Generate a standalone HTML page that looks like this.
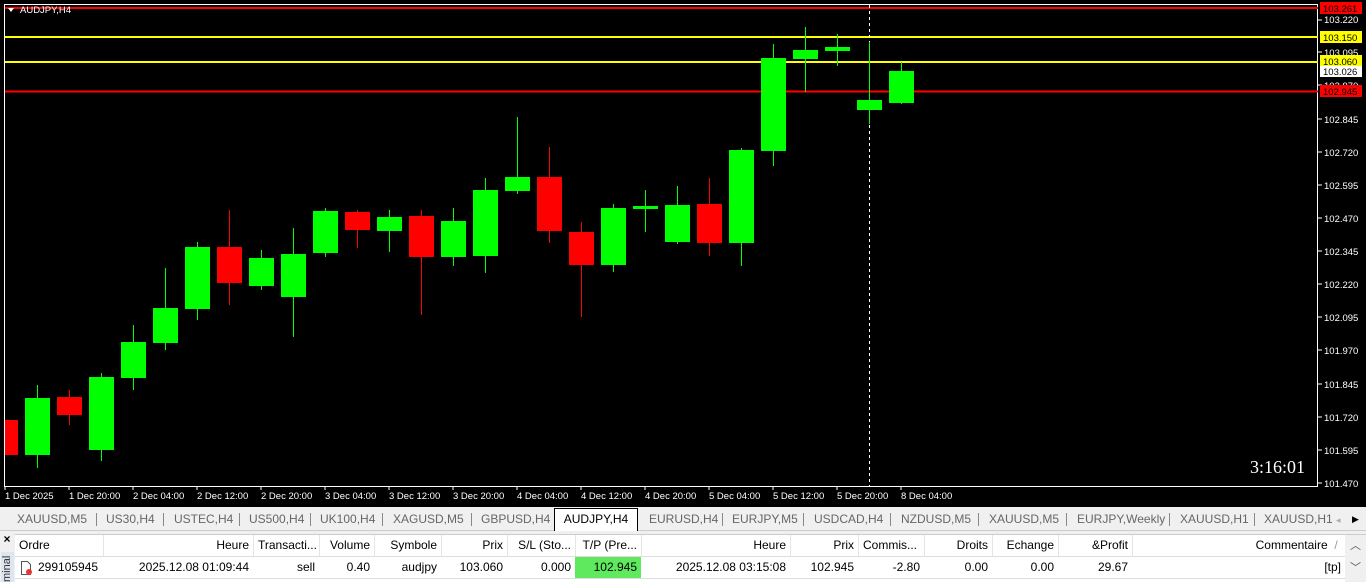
<!DOCTYPE html>
<html><head><meta charset="utf-8"><style>
*{margin:0;padding:0;box-sizing:border-box}
body{width:1366px;height:582px;overflow:hidden;background:#f0f0f0;font-family:"Liberation Sans",sans-serif;position:relative}
.a{position:absolute;white-space:nowrap}
.c{position:absolute;height:21px;line-height:21px;font-size:12px;color:#000;padding:0 4px;overflow:hidden;white-space:nowrap}
.r{text-align:right}
.tab{position:absolute;top:508px;height:22px;line-height:22px;font-size:12px;color:#666}
.sep{position:absolute;top:513px;width:1px;height:13px;background:#888}
</style></head><body>
<div class="a" style="left:0;top:0;width:1366px;height:507px;background:#000"></div>
<svg class="a" style="left:0;top:0" width="1366" height="507">
<rect x="4.5" y="4.5" width="1313" height="482" fill="none" stroke="#fff" stroke-width="1"/>
<g stroke-width="2">
<line x1="5" y1="8" x2="1318" y2="8" stroke="#f00"/>
<line x1="5" y1="37" x2="1318" y2="37" stroke="#ff0"/>
<line x1="5" y1="62" x2="1318" y2="62" stroke="#ff0"/>
<line x1="5" y1="91.5" x2="1318" y2="91.5" stroke="#f00"/>
</g>
<line x1="869.5" y1="5" x2="869.5" y2="486" stroke="#fff" stroke-dasharray="3,3"/>
<g stroke-width="1">
<line x1="37.5" y1="385" x2="37.5" y2="468" stroke="#0f0"/>
<line x1="69.5" y1="390" x2="69.5" y2="425" stroke="#f00"/>
<line x1="101.5" y1="373" x2="101.5" y2="461" stroke="#0f0"/>
<line x1="133.5" y1="325" x2="133.5" y2="390" stroke="#0f0"/>
<line x1="165.5" y1="268" x2="165.5" y2="350" stroke="#0f0"/>
<line x1="197.5" y1="242" x2="197.5" y2="320" stroke="#0f0"/>
<line x1="229.5" y1="210" x2="229.5" y2="305" stroke="#f00"/>
<line x1="261.5" y1="250" x2="261.5" y2="290" stroke="#0f0"/>
<line x1="293.5" y1="228" x2="293.5" y2="337" stroke="#0f0"/>
<line x1="325.5" y1="208" x2="325.5" y2="257" stroke="#0f0"/>
<line x1="357.5" y1="210" x2="357.5" y2="248" stroke="#f00"/>
<line x1="389.5" y1="210" x2="389.5" y2="252" stroke="#0f0"/>
<line x1="421.5" y1="210" x2="421.5" y2="315" stroke="#f00"/>
<line x1="453.5" y1="208" x2="453.5" y2="266" stroke="#0f0"/>
<line x1="485.5" y1="178" x2="485.5" y2="273" stroke="#0f0"/>
<line x1="517.5" y1="117" x2="517.5" y2="194" stroke="#0f0"/>
<line x1="549.5" y1="147" x2="549.5" y2="243" stroke="#f00"/>
<line x1="581.5" y1="222" x2="581.5" y2="317" stroke="#f00"/>
<line x1="613.5" y1="204" x2="613.5" y2="272" stroke="#0f0"/>
<line x1="645.5" y1="190" x2="645.5" y2="232" stroke="#0f0"/>
<line x1="677.5" y1="186" x2="677.5" y2="244" stroke="#0f0"/>
<line x1="709.5" y1="178" x2="709.5" y2="256" stroke="#f00"/>
<line x1="741.5" y1="148" x2="741.5" y2="266" stroke="#0f0"/>
<line x1="773.5" y1="44" x2="773.5" y2="166" stroke="#0f0"/>
<line x1="805.5" y1="27" x2="805.5" y2="92" stroke="#0f0"/>
<line x1="837.5" y1="34" x2="837.5" y2="66" stroke="#0f0"/>
<line x1="869.5" y1="42" x2="869.5" y2="124" stroke="#0f0"/>
<line x1="901.5" y1="62" x2="901.5" y2="104" stroke="#0f0"/>
</g>
<g>
<rect x="5" y="420" width="13" height="35" fill="#f00"/>
<rect x="25" y="398" width="25" height="57" fill="#0f0"/>
<rect x="57" y="397" width="25" height="18" fill="#f00"/>
<rect x="89" y="377" width="25" height="73" fill="#0f0"/>
<rect x="121" y="342" width="25" height="36" fill="#0f0"/>
<rect x="153" y="308" width="25" height="35" fill="#0f0"/>
<rect x="185" y="247" width="25" height="62" fill="#0f0"/>
<rect x="217" y="247" width="25" height="36" fill="#f00"/>
<rect x="249" y="258" width="25" height="28" fill="#0f0"/>
<rect x="281" y="254" width="25" height="43" fill="#0f0"/>
<rect x="313" y="211" width="25" height="42" fill="#0f0"/>
<rect x="345" y="212" width="25" height="18" fill="#f00"/>
<rect x="377" y="217" width="25" height="14" fill="#0f0"/>
<rect x="409" y="216" width="25" height="41" fill="#f00"/>
<rect x="441" y="221" width="25" height="36" fill="#0f0"/>
<rect x="473" y="190" width="25" height="66" fill="#0f0"/>
<rect x="505" y="177" width="25" height="14" fill="#0f0"/>
<rect x="537" y="177" width="25" height="54" fill="#f00"/>
<rect x="569" y="232" width="25" height="33" fill="#f00"/>
<rect x="601" y="208" width="25" height="57" fill="#0f0"/>
<rect x="633" y="206" width="25" height="3" fill="#0f0"/>
<rect x="665" y="205" width="25" height="37" fill="#0f0"/>
<rect x="697" y="204" width="25" height="39" fill="#f00"/>
<rect x="729" y="150" width="25" height="93" fill="#0f0"/>
<rect x="761" y="58" width="25" height="93" fill="#0f0"/>
<rect x="793" y="50" width="25" height="9" fill="#0f0"/>
<rect x="825" y="47" width="25" height="4" fill="#0f0"/>
<rect x="857" y="100" width="25" height="10" fill="#0f0"/>
<rect x="889" y="71" width="25" height="32" fill="#0f0"/>
</g>
<g fill="#fff" font-family="Liberation Sans" font-size="9.5">
<polygon points="8,8 14,8 11,12"/>
<text x="20" y="13">AUDJPY,H4</text>
<g stroke="#fff">
<line x1="1318" y1="20" x2="1322" y2="20"/><line x1="1318" y1="52" x2="1322" y2="52"/><line x1="1318" y1="85" x2="1322" y2="85"/>
<line x1="1318" y1="119" x2="1322" y2="119"/><line x1="1318" y1="152" x2="1322" y2="152"/><line x1="1318" y1="185" x2="1322" y2="185"/>
<line x1="1318" y1="218" x2="1322" y2="218"/><line x1="1318" y1="251" x2="1322" y2="251"/><line x1="1318" y1="284" x2="1322" y2="284"/>
<line x1="1318" y1="317" x2="1322" y2="317"/><line x1="1318" y1="350" x2="1322" y2="350"/><line x1="1318" y1="384" x2="1322" y2="384"/>
<line x1="1318" y1="417" x2="1322" y2="417"/><line x1="1318" y1="450" x2="1322" y2="450"/><line x1="1318" y1="483" x2="1322" y2="483"/>
</g>
<text x="1324" y="23">103.220</text><text x="1324" y="56">103.095</text><text x="1324" y="89">102.970</text>
<text x="1324" y="123">102.845</text><text x="1324" y="156">102.720</text><text x="1324" y="189">102.595</text>
<text x="1324" y="222">102.470</text><text x="1324" y="255">102.345</text><text x="1324" y="288">102.220</text>
<text x="1324" y="321">102.095</text><text x="1324" y="354">101.970</text><text x="1324" y="388">101.845</text>
<text x="1324" y="421">101.720</text><text x="1324" y="454">101.595</text><text x="1324" y="487">101.470</text>
<rect x="1320" y="2" width="42" height="12" fill="#f00"/><text x="1323" y="12" fill="#000">103.261</text>
<rect x="1320" y="31" width="42" height="12" fill="#ff0"/><text x="1323" y="41" fill="#000">103.150</text>
<rect x="1320" y="55" width="42" height="12" fill="#ff0"/><text x="1323" y="65" fill="#000">103.060</text>
<rect x="1320" y="66" width="42" height="11" fill="#fff"/><text x="1323" y="75" fill="#000">103.026</text>
<rect x="1320" y="85" width="42" height="12" fill="#f00"/><text x="1323" y="95" fill="#000">102.945</text>
<g stroke="#fff"><line x1="5" y1="486" x2="5" y2="490"/><line x1="69" y1="486" x2="69" y2="490"/><line x1="133" y1="486" x2="133" y2="490"/><line x1="197" y1="486" x2="197" y2="490"/><line x1="261" y1="486" x2="261" y2="490"/><line x1="325" y1="486" x2="325" y2="490"/><line x1="389" y1="486" x2="389" y2="490"/><line x1="453" y1="486" x2="453" y2="490"/><line x1="517" y1="486" x2="517" y2="490"/><line x1="581" y1="486" x2="581" y2="490"/><line x1="645" y1="486" x2="645" y2="490"/><line x1="709" y1="486" x2="709" y2="490"/><line x1="773" y1="486" x2="773" y2="490"/><line x1="837" y1="486" x2="837" y2="490"/><line x1="901" y1="486" x2="901" y2="490"/></g>
<text x="5" y="499">1 Dec 2025</text><text x="69" y="499">1 Dec 20:00</text><text x="133" y="499">2 Dec 04:00</text>
<text x="197" y="499">2 Dec 12:00</text><text x="261" y="499">2 Dec 20:00</text><text x="325" y="499">3 Dec 04:00</text>
<text x="389" y="499">3 Dec 12:00</text><text x="453" y="499">3 Dec 20:00</text><text x="517" y="499">4 Dec 04:00</text>
<text x="581" y="499">4 Dec 12:00</text><text x="645" y="499">4 Dec 20:00</text><text x="709" y="499">5 Dec 04:00</text>
<text x="773" y="499">5 Dec 12:00</text><text x="837" y="499">5 Dec 20:00</text><text x="901" y="499">8 Dec 04:00</text>
<text x="1250" y="473" font-size="18" font-family="Liberation Serif">3:16:01</text>
</g>
</svg>
<div class="a" style="left:0;top:507px;width:1366px;height:24px;background:#f0f0f0;border-bottom:1px solid #ccc"></div>
<div class="tab" style="left:17px">XAUUSD,M5</div><div class="sep" style="left:96px"></div>
<div class="tab" style="left:106px">US30,H4</div><div class="sep" style="left:163px"></div>
<div class="tab" style="left:174px">USTEC,H4</div><div class="sep" style="left:239px"></div>
<div class="tab" style="left:249px">US500,H4</div><div class="sep" style="left:310px"></div>
<div class="tab" style="left:320px">UK100,H4</div><div class="sep" style="left:382px"></div>
<div class="tab" style="left:393px">XAGUSD,M5</div><div class="sep" style="left:471px"></div>
<div class="tab" style="left:481px">GBPUSD,H4</div>
<div class="a" style="left:554px;top:508px;width:84px;height:23px;background:#fff;border:1px solid #000;border-bottom:none;text-align:center;line-height:21px;font-size:12px;color:#000">AUDJPY,H4</div>
<div class="tab" style="left:649px">EURUSD,H4</div><div class="sep" style="left:722px"></div>
<div class="tab" style="left:732px">EURJPY,M5</div><div class="sep" style="left:803px"></div>
<div class="tab" style="left:814px">USDCAD,H4</div><div class="sep" style="left:890px"></div>
<div class="tab" style="left:901px">NZDUSD,M5</div><div class="sep" style="left:978px"></div>
<div class="tab" style="left:989px">XAUUSD,M5</div><div class="sep" style="left:1066px"></div>
<div class="tab" style="left:1077px">EURJPY,Weekly</div><div class="sep" style="left:1169px"></div>
<div class="tab" style="left:1180px">XAUUSD,H1</div><div class="sep" style="left:1254px"></div>
<div class="tab" style="left:1264px">XAUUSD,H1 <span style="color:#aaa;font-size:9px">◂</span></div>
<div class="tab" style="left:1352px;color:#000;font-size:9px">▶</div>
<div class="a" style="left:0;top:532px;width:14px;height:50px;background:#f0f0f0;font-size:12px;font-weight:bold;text-align:center">×</div>
<div class="a" style="left:1px;top:552px;width:13px;height:30px;background:#dde6f0;font-size:11px;writing-mode:vertical-rl;transform:rotate(180deg);color:#333">minal</div>
<div class="a" style="left:15px;top:534px;width:1351px;height:48px;background:#fff;border-top:1px solid #ccc"></div>
<div class="a" style="left:15px;top:556px;width:1330px;height:1px;background:#ddd"></div>
<div class="a" style="left:15px;top:578px;width:1330px;height:1px;background:#ddd"></div>
<div class="a" style="left:575px;top:557px;width:66px;height:21px;background:#5fe95f"></div>
<div class="c" style="left:15px;top:535px;width:88px">Ordre</div>
<div class="c r" style="left:103px;top:535px;width:150px;border-left:1px solid #e5e5e5">Heure</div>
<div class="c r" style="left:253px;top:535px;width:66px;border-left:1px solid #e5e5e5">Transacti...</div>
<div class="c r" style="left:319px;top:535px;width:55px;border-left:1px solid #e5e5e5">Volume</div>
<div class="c r" style="left:374px;top:535px;width:67px;border-left:1px solid #e5e5e5">Symbole</div>
<div class="c r" style="left:441px;top:535px;width:66px;border-left:1px solid #e5e5e5">Prix</div>
<div class="c r" style="left:507px;top:535px;width:68px;border-left:1px solid #e5e5e5">S/L (Sto...</div>
<div class="c r" style="left:575px;top:535px;width:66px;border-left:1px solid #e5e5e5">T/P (Pre...</div>
<div class="c r" style="left:641px;top:535px;width:149px;border-left:1px solid #e5e5e5">Heure</div>
<div class="c r" style="left:790px;top:535px;width:68px;border-left:1px solid #e5e5e5">Prix</div>
<div class="c" style="left:858px;top:535px;width:66px;border-left:1px solid #e5e5e5">Commis...</div>
<div class="c r" style="left:924px;top:535px;width:68px;border-left:1px solid #e5e5e5">Droits</div>
<div class="c r" style="left:992px;top:535px;width:66px;border-left:1px solid #e5e5e5">Echange</div>
<div class="c r" style="left:1058px;top:535px;width:74px;border-left:1px solid #e5e5e5">&amp;Profit</div>
<div class="c r" style="left:1132px;top:535px;width:213px;border-left:1px solid #e5e5e5">Commentaire &nbsp;<span style="color:#999">/</span>&nbsp;</div>
<div class="c" style="left:22px;top:557px;width:81px;padding-left:16px">299105945</div>
<svg class="a" style="left:19px;top:560px" width="14" height="16"><path d="M2.5 1.5h6l3 3v10h-9z" fill="#fff" stroke="#555"/><circle cx="10" cy="12" r="3" fill="#e33"/></svg>
<div class="c r" style="left:103px;top:557px;width:150px">2025.12.08 01:09:44</div>
<div class="c r" style="left:253px;top:557px;width:66px">sell</div>
<div class="c r" style="left:319px;top:557px;width:55px">0.40</div>
<div class="c r" style="left:374px;top:557px;width:67px">audjpy</div>
<div class="c r" style="left:441px;top:557px;width:66px">103.060</div>
<div class="c r" style="left:507px;top:557px;width:68px">0.000</div>
<div class="c r" style="left:575px;top:557px;width:66px">102.945</div>
<div class="c r" style="left:641px;top:557px;width:149px">2025.12.08 03:15:08</div>
<div class="c r" style="left:790px;top:557px;width:68px">102.945</div>
<div class="c r" style="left:858px;top:557px;width:66px">-2.80</div>
<div class="c r" style="left:924px;top:557px;width:68px">0.00</div>
<div class="c r" style="left:992px;top:557px;width:66px">0.00</div>
<div class="c r" style="left:1058px;top:557px;width:74px">29.67</div>
<div class="c r" style="left:1132px;top:557px;width:213px">[tp]</div>
<div class="a" style="left:1345px;top:535px;width:21px;height:47px;background:#f0f0f0;font-size:11px;color:#555;text-align:center;line-height:22px">︿<br>﹀</div>
</body></html>
